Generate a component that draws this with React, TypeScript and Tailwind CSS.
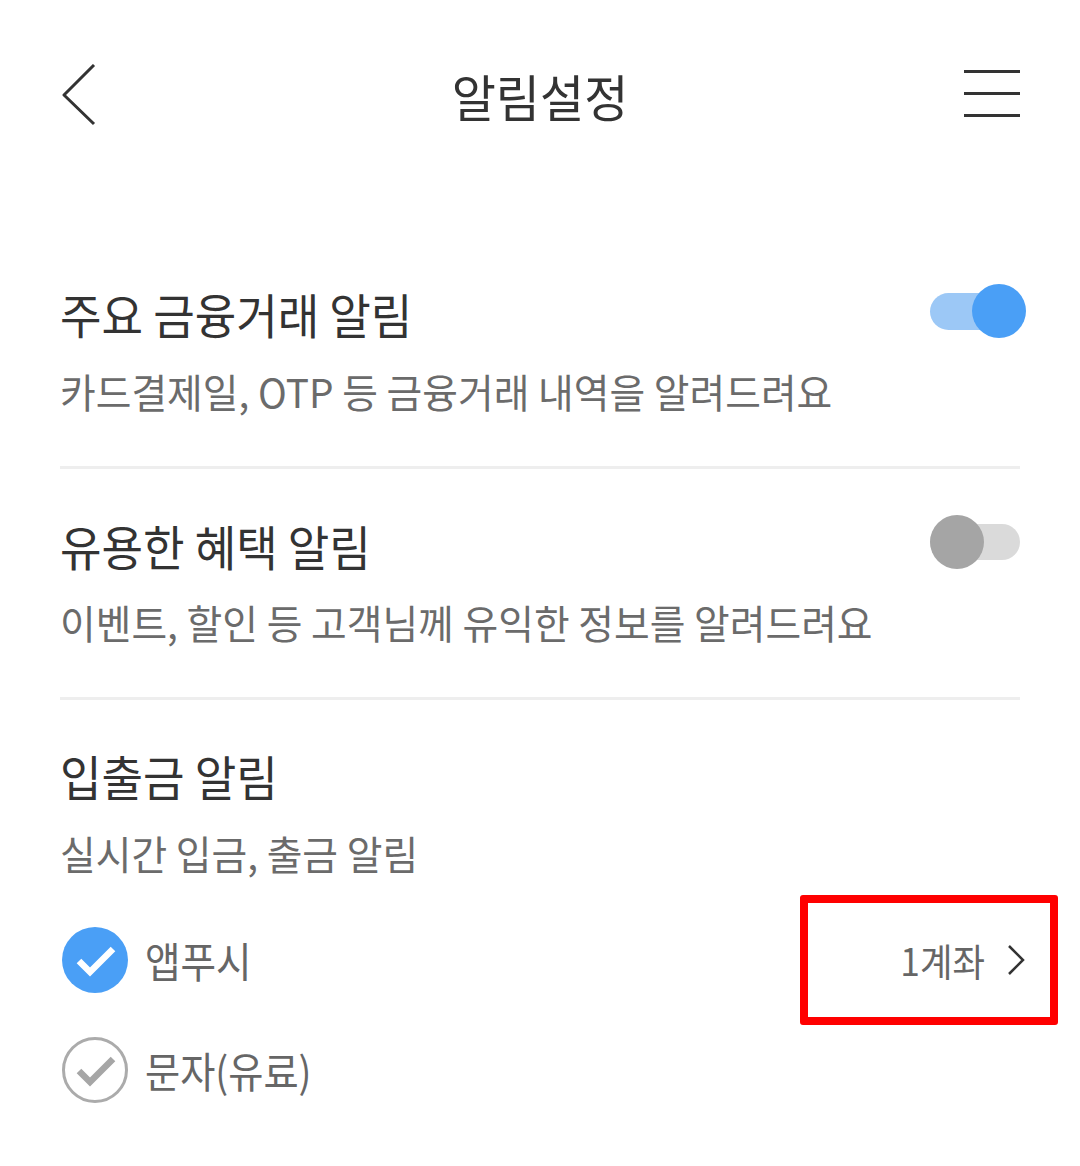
import React from "react";

const font = { fontFamily: '"Noto Sans CJK KR", "Noto Sans", sans-serif' };

function Toggle({ on }: { on: boolean }) {
  return on ? (
    <div className="relative w-[96px] h-[54px] flex items-center">
      <div className="absolute left-0 right-[4px] h-[37px] rounded-full bg-[#9cc8f6]" />
      <div className="absolute right-0 w-[54px] h-[54px] rounded-full bg-[#4a9ff6]" />
    </div>
  ) : (
    <div className="relative w-[90px] h-[54px] flex items-center">
      <div className="absolute left-0 right-0 h-[36px] rounded-full bg-[#dadada]" />
      <div className="absolute left-0 w-[54px] h-[54px] rounded-full bg-[#a5a5a5]" />
    </div>
  );
}

function Title({ children }: { children: React.ReactNode }) {
  return (
    <div className="h-[60px] flex items-center">
      <span className="inline-block origin-left scale-x-[0.94] text-[48px] leading-none text-[#333333] whitespace-nowrap">
        {children}
      </span>
    </div>
  );
}

function Sub({ children }: { children: React.ReactNode }) {
  return (
    <div className="h-[50px] flex items-center">
      <span className="inline-block origin-left scale-x-[0.97] text-[40px] leading-none text-[#6b6b6b] whitespace-nowrap">
        {children}
      </span>
    </div>
  );
}

function Check({ on }: { on: boolean }) {
  return on ? (
    <svg width="66" height="66" viewBox="0 0 66 66" className="ml-[2px] shrink-0">
      <circle cx="33" cy="33" r="33" fill="#4a9ff6" />
      <path d="M17 34 L28 45 L51 22" fill="none" stroke="white" strokeWidth="6.5" />
    </svg>
  ) : (
    <svg width="66" height="66" viewBox="0 0 66 66" className="ml-[2px] shrink-0">
      <circle cx="33" cy="33" r="31.5" fill="none" stroke="#ababab" strokeWidth="3" />
      <path d="M17 34 L28 45 L51 22" fill="none" stroke="#a6a6a6" strokeWidth="6.5" />
    </svg>
  );
}

export default function App() {
  return (
    <div className="w-[1080px] h-[1166px] bg-white overflow-hidden" style={font}>
      {/* header */}
      <div className="h-[190px] flex items-start pt-[64px] px-[60px] justify-between">
        <div className="w-[56px]">
          <svg width="36" height="62" viewBox="0 0 36 62" className="ml-[1px]">
            <path d="M33 1 L3 31 L33 60" fill="none" stroke="#333" strokeWidth="3" strokeLinejoin="round" />
          </svg>
        </div>
        <div className="h-[62px] flex items-center">
          <span className="inline-block scale-x-[0.96] text-[50px] leading-none text-[#333333]">알림설정</span>
        </div>
        <div className="w-[56px] flex flex-col gap-[19px] pt-[6px]">
          <div className="w-[56px] h-[3px] bg-[#333]" />
          <div className="w-[56px] h-[3px] bg-[#333]" />
          <div className="w-[56px] h-[3px] bg-[#333]" />
        </div>
      </div>

      <div className="px-[60px]">
        {/* section 1 */}
        <div className="pt-[93px] pb-[50px]">
          <div className="flex items-center justify-between">
            <Title>주요 금융거래 알림</Title>
            <div className="-mr-[6px] -mt-[4px]"><Toggle on /></div>
          </div>
          <div className="mt-[23px]">
            <Sub>카드결제일, OTP 등 금융거래 내역을 알려드려요</Sub>
          </div>
        </div>
        <div className="h-[3px] bg-[#eeeeee]" />

        {/* section 2 */}
        <div className="pt-[46px] pb-[50px]">
          <div className="flex items-center justify-between">
            <Title>유용한 혜택 알림</Title>
            <div className="-mt-[6px]"><Toggle on={false} /></div>
          </div>
          <div className="mt-[22px]">
            <Sub>이벤트, 할인 등 고객님께 유익한 정보를 알려드려요</Sub>
          </div>
        </div>
        <div className="h-[3px] bg-[#eeeeee]" />

        {/* section 3 */}
        <div className="pt-[45px]">
          <Title>입출금 알림</Title>
          <div className="mt-[23px]">
            <Sub>실시간 입금, 출금 알림</Sub>
          </div>
        </div>

        <div className="mt-[17px] flex items-center justify-between">
          <div className="flex items-center gap-[17px]">
            <Check on />
            <span className="inline-block origin-left scale-x-[0.92] text-[42px] leading-none text-[#666666]">앱푸시</span>
          </div>
          <div className="relative w-[258px] h-[130px] border-[8px] border-[#ff0000] rounded-[3px] -mr-[38px] flex items-center justify-end pr-[24px] gap-[21px]">
            <span className="inline-block origin-right scale-x-[0.93] text-[38px] leading-none text-[#666666]">1계좌</span>
            <svg width="20" height="32" viewBox="0 0 20 32">
              <path d="M3 2 L17 16 L3 30" fill="none" stroke="#333" strokeWidth="2.5" />
            </svg>
          </div>
        </div>

        <div className="mt-[12px] flex items-center gap-[17px]">
          <Check on={false} />
          <span className="inline-block origin-left scale-x-[0.91] text-[42px] leading-none text-[#666666]">문자(유료)</span>
        </div>
      </div>
    </div>
  );
}
